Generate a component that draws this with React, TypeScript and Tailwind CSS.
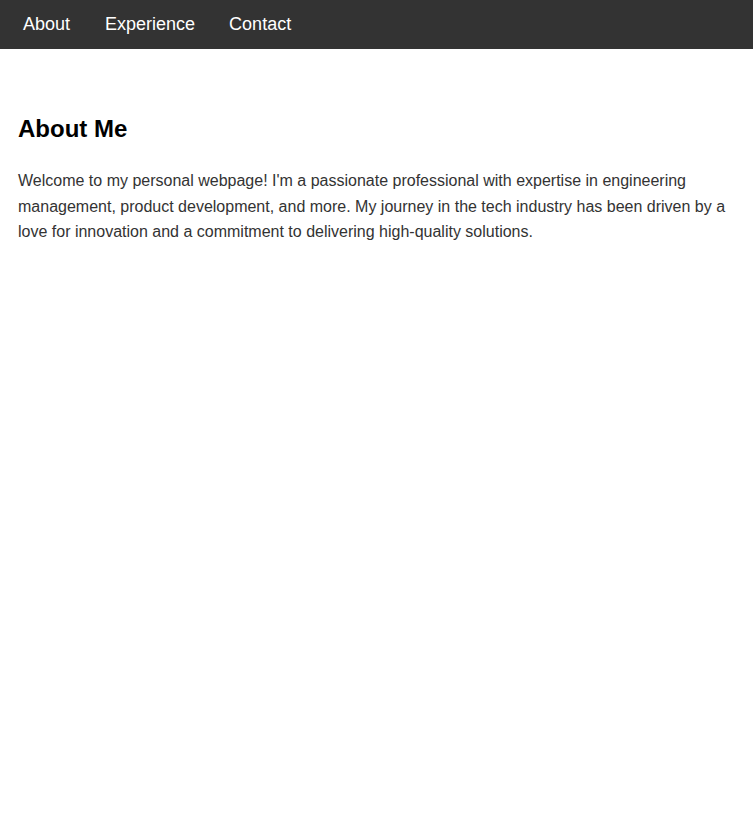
export default function App() {
  return (
    <div className="min-h-[821px] bg-white" style={{ fontFamily: '"Liberation Sans", Arial, sans-serif' }}>
      <nav className="flex h-[49px] items-start gap-[34px] bg-[#333333] pl-[23px] text-[18px] text-white">
        <a className="leading-[48px]">About</a>
        <a className="ml-[1px] leading-[48px]">Experience</a>
        <a className="leading-[48px]">Contact</a>
      </nav>
      <section className="px-[18px] pt-[64px]">
        <h2 className="text-[24px] font-bold leading-[32px] text-black">About Me</h2>
        <p className="mt-[23px] text-[16px] leading-[25.6px] text-[#333333]">
          Welcome to my personal webpage! I'm a passionate professional with expertise in engineering management, product development, and more. My journey in the tech industry has been driven by a love for innovation and a commitment to delivering high-quality solutions.
        </p>
      </section>
    </div>
  );
}
